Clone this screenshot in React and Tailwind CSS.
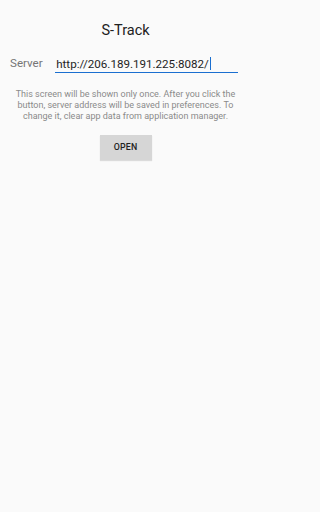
export default function App() {
  return (
    <div className="min-h-screen w-full bg-[#fafafa]">
      <div
        className="w-[251px] flex flex-col items-center"
        style={{ fontFamily: 'Roboto, "Liberation Sans", sans-serif' }}
      >
        <h1 className="mt-[22px] text-[14.5px] leading-[17px] text-[#212121]">S-Track</h1>

        <div className="mt-[17px] w-full flex items-end pl-[10px] pr-[13px]">
          <span className="text-[11.6px] leading-[14px] text-[#757575] pb-[2.5px]">Server</span>
          <div className="ml-[12px] flex-1 border-b-[1.5px] border-[#1a6fd0] pb-[1px] pl-[1.5px] flex items-center">
            <span className="text-[11.6px] leading-[14px] text-[#1e1e1e]">http://206.189.191.225:8082/</span>
            <span className="ml-[1px] w-[1px] h-[13px] bg-[#1a6fd0]" />
          </div>
        </div>

        <p className="mt-[16px] px-[13px] text-center text-[9px] leading-[11.4px] text-[#8a8a8a]">
          This screen will be shown only once. After you click the button, server address will be saved in preferences. To change it, clear app data from application manager.
        </p>

        <button className="mt-[12px] w-[52px] h-[25px] bg-[#d6d6d6] text-[8.8px] font-medium text-[#222222] tracking-[0.2px] shadow-[0_1px_1px_rgba(0,0,0,0.12)]">
          OPEN
        </button>
      </div>
    </div>
  );
}
